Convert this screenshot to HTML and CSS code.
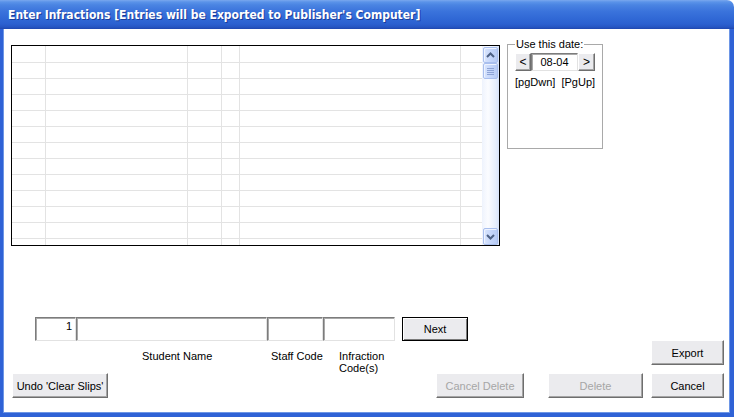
FILE: index.html
```html
<!DOCTYPE html>
<html>
<head>
<meta charset="utf-8">
<link rel="stylesheet" href="styles.css">
</head>
<body>
<div class="window">
  <div class="titlebar"><span class="title">Enter Infractions [Entries will be Exported to Publisher's Computer]</span></div>
  <div class="body">
    <div class="toprow">
      <div class="grid">
        <div class="cells">
          <div class="col c1"></div>
          <div class="col c2"></div>
          <div class="col c3"></div>
          <div class="col c4"></div>
          <div class="col c5"></div>
          <div class="col c6"></div>
        </div>
        <div class="vscroll">
          <div class="sbtn up"><svg width="9" height="6" viewBox="0 0 9 6"><path d="M1 5 L4.5 1.5 L8 5" fill="none" stroke="#4d6185" stroke-width="2"/></svg></div>
          <div class="sbtn thumb"><svg width="7" height="8" viewBox="0 0 7 8"><path d="M0 1.5H7M0 3.5H7M0 5.5H7M0 7.5H7" stroke="#8ea4d6" stroke-width="1"/></svg></div>
          <div class="track"></div>
          <div class="sbtn down"><svg width="9" height="6" viewBox="0 0 9 6"><path d="M1 1 L4.5 4.5 L8 1" fill="none" stroke="#4d6185" stroke-width="2"/></svg></div>
        </div>
      </div>
      <fieldset class="datebox">
        <legend>Use this date:</legend>
        <div class="datecontent">
          <div class="daterow">
            <button class="btn small">&lt;</button>
            <div class="tb datetb">08-04</div>
            <button class="btn small wide">&gt;</button>
          </div>
          <div class="pgkeys">[pgDwn]&nbsp; [PgUp]</div>
        </div>
      </fieldset>
    </div>
    <div class="inputs">
      <div class="tb num">1</div>
      <div class="tb name"></div>
      <div class="tb staff"></div>
      <div class="tb infr"></div>
      <button class="btn default next">Next</button>
    </div>
    <div class="row1">
      <div class="lbl l-name">Student Name</div>
      <div class="lbl l-staff">Staff Code</div>
      <div class="lbl l-infr">Infraction<br>Code(s)</div>
      <button class="btn export">Export</button>
    </div>
    <div class="row2">
      <button class="btn undo">Undo 'Clear Slips'</button>
      <button class="btn disabled canceldel">Cancel Delete</button>
      <button class="btn disabled del">Delete</button>
      <button class="btn cancel">Cancel</button>
    </div>
  </div>
</div>
</body>
</html>
```

FILE: styles.css
```css
html, body {
  margin: 0;
  padding: 0;
  background: #fff;
}
body {
  font-family: "Liberation Sans", Arial, sans-serif;
  font-size: 11px;
  color: #000;
}
.window {
  width: 734px;
  height: 417px;
  display: flex;
  flex-direction: column;
  background: #fff;
}
.titlebar {
  height: 29px;
  flex: none;
  display: flex;
  align-items: center;
  padding-left: 8px;
  border-radius: 0 7px 0 0;
  background: linear-gradient(to bottom, #7aa8ee 0px, #5a93e9 2px, #4a84e2 5px, #3b74dc 11px, #3169d6 18px, #2b60d0 24px, #2656c3 27px, #1f47ae 29px);
}
.title {
  color: #fff;
  font-family: "DejaVu Sans Condensed", "DejaVu Sans", sans-serif;
  font-weight: bold;
  font-size: 12px;
  text-shadow: 1px 1px 0 #1b3d9a;
  margin-top: 1px;
}
.body {
  flex: 1;
  display: flex;
  flex-direction: column;
  border-left: 3px solid #2f62d6;
  border-right: 4px solid #2f62d6;
  border-bottom: 4px solid #2f62d6;
  box-shadow: inset 1px 0 0 #6d96e6, inset -1px 0 0 #6d96e6, inset 0 -1px 0 #6d96e6;
}
.toprow {
  display: flex;
  align-items: flex-start;
}
.grid {
  margin: 16px 0 0 8px;
  width: 489px;
  height: 201px;
  box-sizing: border-box;
  border: 1px solid #000;
  display: flex;
  flex: none;
}
.cells {
  flex: 1;
  display: flex;
  background-image: repeating-linear-gradient(to bottom, transparent 0 15px, #e3e3e3 15px 16px);
  background-position: 0 1px;
}
.col {
  border-right: 1px solid #e3e3e3;
}
.c1 { width: 33px; }
.c2 { width: 141px; }
.c3 { width: 33px; }
.c4 { width: 17px; }
.c5 { width: 220px; }
.c6 { flex: 1; border-right: none; }
.vscroll {
  width: 17px;
  flex: none;
  display: flex;
  flex-direction: column;
  background: linear-gradient(to right, #eef3fd, #fbfcff 35%, #e6eefc 80%, #d7e3fa);
}
.sbtn {
  box-sizing: border-box;
  width: 15px;
  height: 16px;
  margin-left: 1px;
  border: 1px solid #a9bfee;
  border-radius: 2px;
  background: linear-gradient(to right, #d9e5fd, #c6d7fb 50%, #b7cbf5);
  box-shadow: inset 1px 1px 0 #eef3ff;
  display: flex;
  align-items: center;
  justify-content: center;
}
.up { margin-top: 1px; }
.thumb { height: 16px; }
.track { flex: 1; }
.down { height: 17px; }
.datebox {
  margin: 9px 0 0 7px;
  padding: 0 7px;
  width: 96px;
  box-sizing: border-box;
  border: 1px solid #a9a9a9;
  min-inline-size: 0;
}
.datebox legend {
  padding: 0 1px;
  margin: 0;
  line-height: 13px;
  font-size: 11px;
}
.datecontent {
  height: 95px;
}
.daterow {
  display: flex;
  margin-top: 2px;
  height: 18px;
}
.btn {
  box-sizing: border-box;
  background: #ebebee;
  border: 1px solid;
  border-color: #ffffff #6e6e6e #6e6e6e #ffffff;
  box-shadow: inset -1px -1px 0 #a5a5a5;
  font-family: "Liberation Sans", Arial, sans-serif;
  font-size: 11px;
  color: #000;
  padding: 0;
  margin: 0;
  display: flex;
  align-items: center;
  justify-content: center;
  height: 25px;
}
.btn.small {
  width: 16px;
  height: 18px;
  font-size: 12px;
}
.btn.small.wide { width: 17px; }
.tb {
  box-sizing: border-box;
  height: 24px;
  background: #fff;
  border-top: 1px solid #7c7c7c;
  border-left: 1px solid #7c7c7c;
  border-right: 1px solid #e2e2e2;
  border-bottom: 1px solid #e2e2e2;
  box-shadow: inset 1px 1px 0 #a9a9a9;
  line-height: 13px;
}
.datetb {
  width: 48px;
  height: 18px;
  text-align: center;
  line-height: 14px;
  padding-top: 1px;
}
.pgkeys {
  margin-top: 5px;
  line-height: 13px;
  white-space: nowrap;
}
.inputs {
  display: flex;
  margin: 71px 0 0 32px;
}
.num {
  width: 41px;
  text-align: right;
  padding: 2px 3px 0 0;
}
.name { width: 191px; }
.staff { width: 56px; }
.infr { width: 72px; }
.btn.default {
  border: 1px solid #000;
  box-shadow: inset 1px 1px 0 #fff, inset -1px -1px 0 #7a7a7a;
}
.next {
  width: 66px;
  height: 24px;
  margin-left: 7px;
}
.row1 {
  display: flex;
  height: 32px;
}
.lbl {
  padding-top: 9px;
  line-height: 12px;
}
.l-name { margin-left: 139px; width: 129px; }
.l-staff { width: 68px; }
.l-infr { width: 80px; }
.export {
  margin: -1px 6px 0 auto;
  width: 73px;
  height: 25px;
}
.row2 {
  display: flex;
}
.undo { margin-left: 9px; width: 96px; }
.canceldel { margin-left: 328px; width: 88px; }
.del { margin-left: 24px; width: 95px; }
.cancel { margin-left: 8px; width: 73px; }
.btn.disabled {
  color: #a6a6a6;
}
```
